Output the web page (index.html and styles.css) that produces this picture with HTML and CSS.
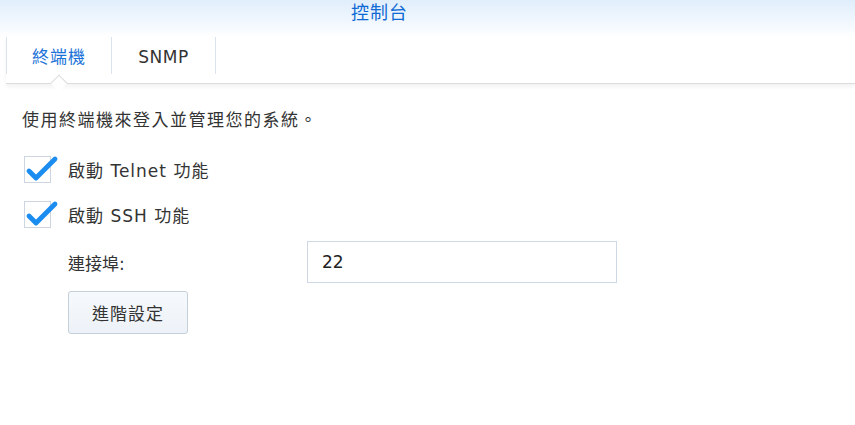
FILE: index.html
```html
<!DOCTYPE html>
<html lang="zh-Hant">
<head>
    <meta charset="UTF-8">
    <meta name="viewport" content="width=device-width, initial-scale=1.0">
    <title>控制台</title>
    <link rel="stylesheet" href="styles.css">
</head>
<body>
    <div class="header">
        <span class="title">控制台</span>
    </div>

    <div class="tabs">
        <div class="tab active">終端機</div>
        <div class="tab">SNMP</div>
    </div>

    <div class="content">
        <p class="desc">使用終端機來登入並管理您的系統。</p>

        <label class="check-row">
            <span class="checkbox">
                <svg width="34" height="28" viewBox="0 0 34 28"><polyline points="4,15 11,22 30,3" /></svg>
            </span>
            啟動 Telnet 功能
        </label>

        <label class="check-row second">
            <span class="checkbox">
                <svg width="34" height="28" viewBox="0 0 34 28"><polyline points="4,15 11,22 30,3" /></svg>
            </span>
            啟動 SSH 功能
        </label>

        <div class="sub">
            <div class="field-row">
                <span class="field-label">連接埠:</span>
                <input class="text-input" type="text" value="22">
            </div>
            <button class="btn">進階設定</button>
        </div>
    </div>
</body>
</html>
```

FILE: styles.css
```css
body {
    margin: 0;
    font-family: "DejaVu Sans", "Noto Sans CJK TC", sans-serif;
    font-size: 17px;
    color: #333;
    background: #fff;
}
.header {
    height: 37px;
    padding-right: 96px;
    background: linear-gradient(#e0eefc, #f4f9fe 70%, #fff);
    text-align: center;
}
.title {
    display: inline-block;
    line-height: 26px;
    font-size: 18px;
    letter-spacing: 1px;
    color: #0f6ad4;
}
.tabs {
    position: relative;
    display: flex;
    height: 46px;
    margin-left: 6px;
    border-bottom: 1px solid #dcdcdc;
    box-shadow: 0 3px 4px rgba(0, 0, 0, 0.05);
}
.tab {
    height: 37px;
    line-height: 40px;
    border-right: 1px solid #dbe4ec;
    text-align: center;
    font-size: 17px;
    letter-spacing: 0.5px;
    color: #333;
}
.tab:first-child {
    width: 104px;
    border-left: 1px solid #dbe4ec;
}
.tab:nth-child(2) {
    width: 103px;
}
.tab.active {
    position: relative;
    color: #1a72d8;
    letter-spacing: 1px;
}
.tab.active::after {
    content: "";
    position: absolute;
    left: 46px;
    top: 40px;
    width: 11px;
    height: 11px;
    background: #fff;
    border-top: 1px solid #dcdcdc;
    border-left: 1px solid #dcdcdc;
    transform: rotate(45deg);
}
.content {
    padding: 24px 22px 0;
}
.desc {
    margin: 0;
    line-height: 24px;
    letter-spacing: 1.5px;
}
.check-row {
    display: flex;
    align-items: center;
    height: 32px;
    margin-top: 21px;
    letter-spacing: 1px;
}
.check-row.second {
    margin-top: 13px;
}
.checkbox {
    position: relative;
    width: 25px;
    height: 25px;
    margin-left: 2px;
    margin-right: 17px;
    border: 1px solid #cdd6e0;
    background: #fff;
}
.checkbox svg {
    position: absolute;
    left: 0;
    top: -1px;
    overflow: visible;
}
.checkbox polyline {
    fill: none;
    stroke: #1b8cf0;
    stroke-width: 4.8;
    stroke-linecap: round;
    stroke-linejoin: round;
}
.sub {
    padding-left: 46px;
}
.field-row {
    display: flex;
    align-items: center;
    margin-top: 11px;
}
.field-label {
    width: 239px;
}
.text-input {
    box-sizing: border-box;
    width: 310px;
    height: 42px;
    padding: 0 14px;
    border: 1px solid #cfd9e6;
    border-radius: 0;
    font-family: "DejaVu Sans", sans-serif;
    font-size: 17px;
    color: #222;
    outline: none;
}
.btn {
    display: block;
    box-sizing: border-box;
    width: 120px;
    height: 43px;
    margin-top: 8px;
    border: 1px solid #c6d0db;
    border-radius: 3px;
    background: linear-gradient(#f6f9fc, #edf2f8);
    font-family: "DejaVu Sans", "Noto Sans CJK TC", sans-serif;
    font-size: 17px;
    letter-spacing: 1px;
    color: #333;
}
```
